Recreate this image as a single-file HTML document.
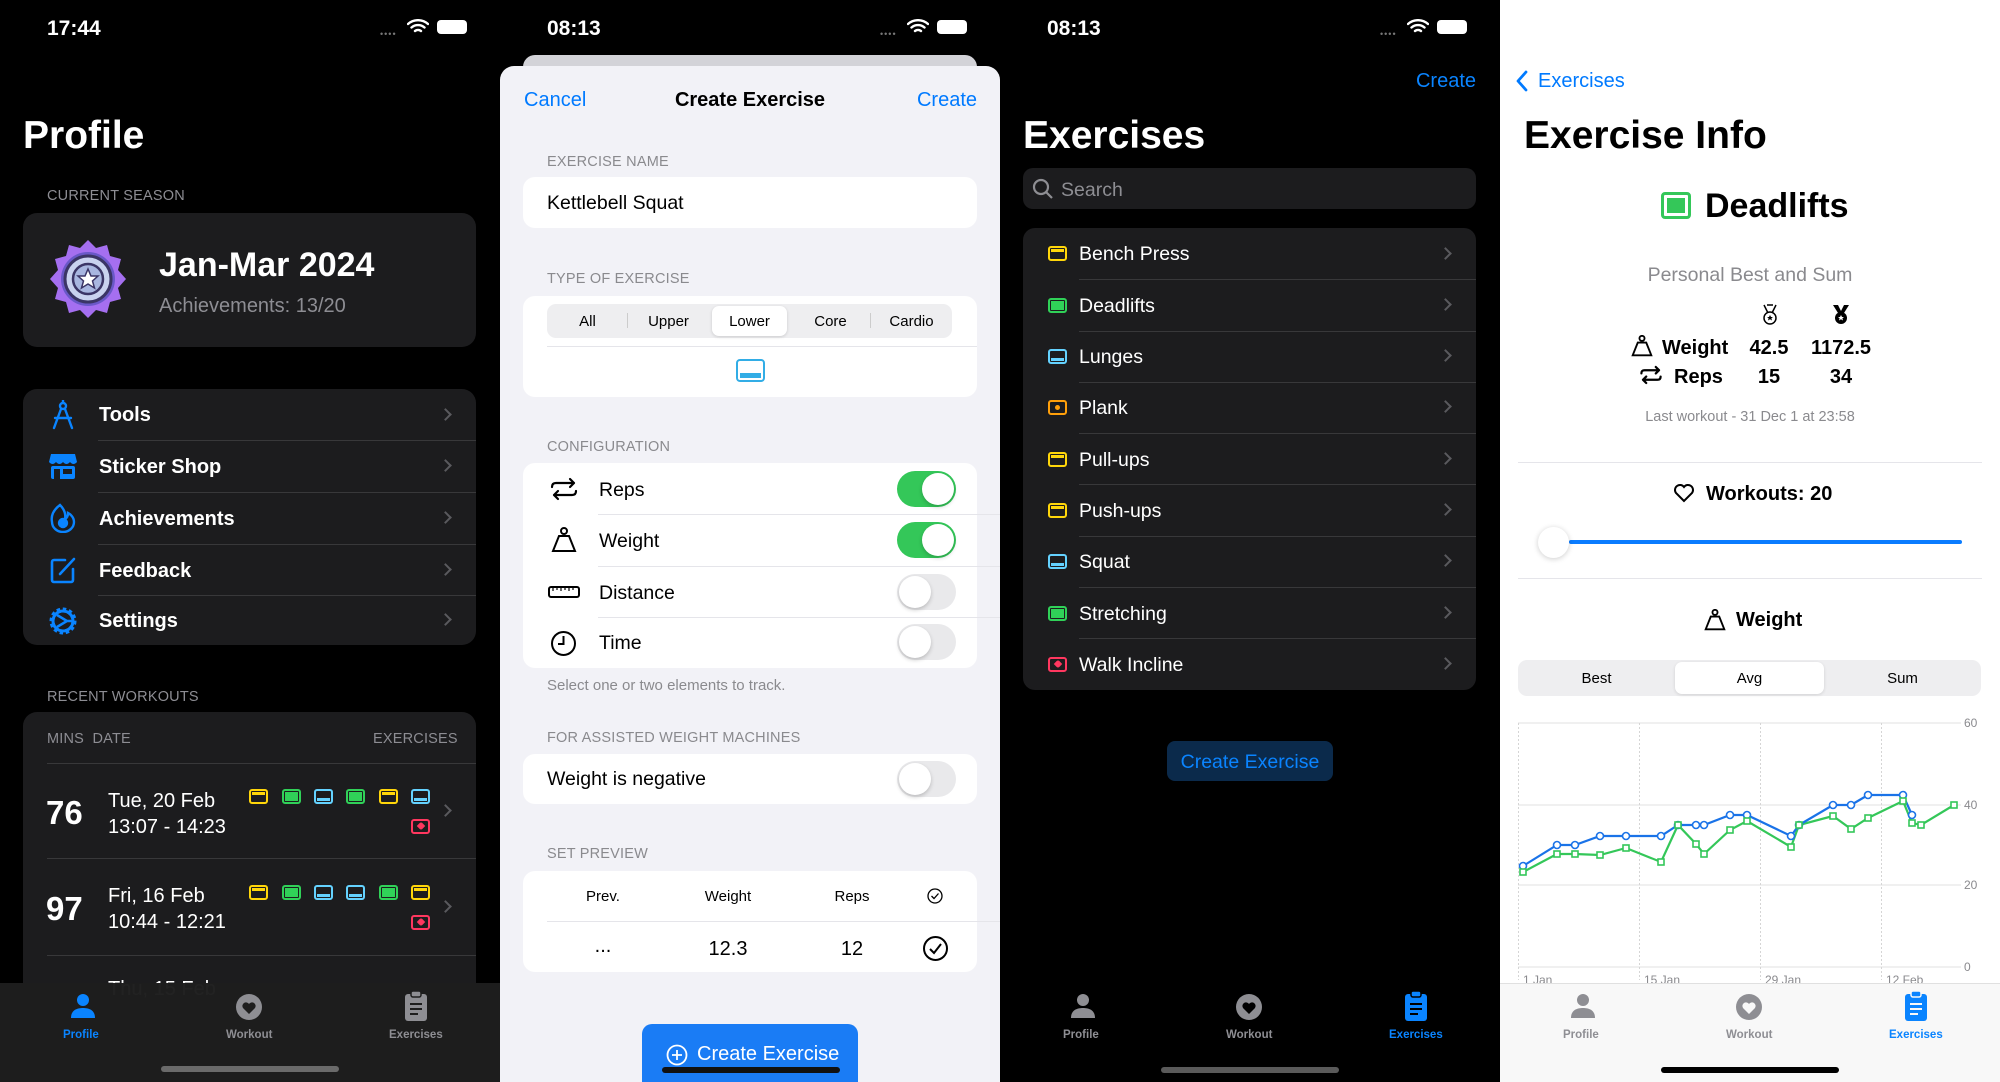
<!DOCTYPE html>
<html><head><meta charset="utf-8">
<style>
*{margin:0;padding:0;box-sizing:border-box}
body{width:2000px;height:1082px;overflow:hidden;background:#000;font-family:"Liberation Sans",sans-serif;position:relative}
.p{position:absolute;top:0;height:1082px;width:500px;overflow:hidden}
.a{position:absolute;white-space:nowrap}
.st{font-weight:bold;font-size:21px;top:17px;left:47px}
.cap{font-size:14.5px;letter-spacing:.2px}
.ex{position:absolute;width:19px;height:15px;border:2px solid;border-radius:3px}
.ex i{position:absolute;display:block}
.y{border-color:#ffd60a}.y i{left:1px;right:1px;top:1px;height:3px;background:#ffd60a}
.g{border-color:#30d158}.g i{left:1px;right:1px;top:1px;bottom:1px;background:#30d158}
.b{border-color:#64d2ff}.b i{left:1px;right:1px;bottom:1px;height:3px;background:#64d2ff}
.o{border-color:#ff9f0a}.o i{left:5px;top:3px;width:5px;height:5px;border-radius:3px;background:#ff9f0a}
.r{border-color:#ff375f}.r i{left:5px;top:2px;width:6px;height:6px;background:#ff375f;transform:rotate(45deg);border-radius:2px 0 2px 0}
.chev{position:absolute;width:9px;height:9px;border-right:2px solid #5a5a5e;border-top:2px solid #5a5a5e;transform:rotate(45deg)}
.sep{position:absolute;height:1px}
.tog{position:absolute;width:59px;height:36px;border-radius:18px}
.tog::after{content:"";position:absolute;top:2px;width:32px;height:32px;border-radius:16px;background:#fff;box-shadow:0 2px 4px rgba(0,0,0,.2)}
.on{background:#34c759}.on::after{right:2px}
.off{background:#e9e9eb}.off::after{left:2px}
.tl{top:1029px !important}
</style></head><body>

<!-- PANEL 1 -->
<div class="p" style="left:0;background:#000">
 <div class="a st" style="color:#fff">17:44</div>
 <div class="a" style="left:380px;top:29px;color:#777;font-size:9px;letter-spacing:1px">••••</div>
 <svg class="a" style="left:407px;top:19px" width="22" height="16" viewBox="0 0 22 16"><path d="M1 5a15 15 0 0 1 20 0M4.5 8.5a10 10 0 0 1 13 0M8 12a5 5 0 0 1 6 0" stroke="#fff" stroke-width="2.4" fill="none" stroke-linecap="round"/></svg>
 <div class="a" style="left:437px;top:20px;width:30px;height:14px;border-radius:4px;background:#fff"></div>
 <div class="a" style="left:23px;top:114px;font-size:39px;font-weight:bold;color:#fff">Profile</div>
 <div class="a cap" style="left:47px;top:188px;color:#8d8d93">CURRENT SEASON</div>
 <div class="a" style="left:23px;top:213px;width:453px;height:134px;border-radius:14px;background:#1c1c1e"></div>
 <svg class="a" style="left:47px;top:238px" width="82" height="82" viewBox="0 0 82 82">
  <polygon points="41,2 49,10 60,7 63,18 74,21 71,32 79,41 71,50 74,61 63,64 60,75 49,72 41,80 33,72 22,75 19,64 8,61 11,50 3,41 11,32 8,21 19,18 22,7 33,10" fill="#a56ff0"/>
  <circle cx="41" cy="41" r="27" fill="#6a58c8"/><circle cx="41" cy="41" r="23" fill="#c9d2ef" stroke="#3b3566" stroke-width="3"/>
  <circle cx="41" cy="41" r="15" fill="#a8b6e0" stroke="#3b3566" stroke-width="2.5"/>
  <polygon points="41,31 44,38 51,38 45.5,43 47.5,50 41,46 34.5,50 36.5,43 31,38 38,38" fill="#fff" stroke="#3b3566" stroke-width="1.5"/></svg>
 <div class="a" style="left:159px;top:246px;font-size:34px;font-weight:bold;color:#fff">Jan-Mar 2024</div>
 <div class="a" style="left:159px;top:295px;font-size:20px;color:#8d8d93">Achievements: 13/20</div>

 <div class="a" style="left:23px;top:389px;width:453px;height:256px;border-radius:14px;background:#1c1c1e"></div>
 <div class="sep" style="left:98px;right:24px;top:440px;background:#38383a"></div>
 <div class="sep" style="left:98px;right:24px;top:492px;background:#38383a"></div>
 <div class="sep" style="left:98px;right:24px;top:544px;background:#38383a"></div>
 <div class="sep" style="left:98px;right:24px;top:595px;background:#38383a"></div>
 <svg class="a" style="left:50px;top:400px" width="26" height="30" viewBox="0 0 26 30" fill="none" stroke="#0a84ff" stroke-width="2.4" stroke-linecap="round"><circle cx="13" cy="6" r="3"/><path d="M13 2V0M11 9L4 28M15 9L22 28M5 18h16"/></svg>
 <svg class="a" style="left:48px;top:452px" width="30" height="28" viewBox="0 0 30 28"><path d="M3 2h24l2 8H1z" fill="#0a84ff"/><path d="M1 10q3.5 4 7 0 3.5 4 7 0 3.5 4 7 0 3.5 4 7 0" fill="#0a84ff"/><rect x="3" y="14" width="24" height="13" rx="2" fill="#0a84ff"/><rect x="6" y="17" width="6" height="10" fill="#1c1c1e"/><rect x="15" y="17" width="9" height="5" fill="#1c1c1e"/></svg>
 <svg class="a" style="left:50px;top:503px" width="26" height="30" viewBox="0 0 26 30" fill="none" stroke="#0a84ff" stroke-width="2.4"><path d="M10 2c-8 6-9 12-8 17a11 10 0 0 0 22 0c0-5-4-8-6-9 0 3-1 5-3 6 1-5-1-10-5-14z"/><circle cx="13" cy="20" r="4" fill="#0a84ff"/></svg>
 <svg class="a" style="left:50px;top:556px" width="26" height="28" viewBox="0 0 26 28" fill="none" stroke="#0a84ff" stroke-width="2.6" stroke-linecap="round"><path d="M15 4H4a2 2 0 0 0-2 2v18a2 2 0 0 0 2 2h17a2 2 0 0 0 2-2V13"/><path d="M10 18L24 3"/></svg>
 <svg class="a" style="left:48px;top:606px" width="30" height="30" viewBox="0 0 30 30"><circle cx="15" cy="15" r="11" fill="none" stroke="#0a84ff" stroke-width="5" stroke-dasharray="3.2 2.5"/><circle cx="15" cy="15" r="10" fill="none" stroke="#0a84ff" stroke-width="3"/><path d="M9 9l10 6-10 6M19 15h5" stroke="#0a84ff" stroke-width="2.5" fill="none"/></svg>
 <div class="a" style="left:99px;top:404px;font-size:20px;font-weight:bold;color:#fff">Tools</div>
 <div class="a" style="left:99px;top:456px;font-size:20px;font-weight:bold;color:#fff">Sticker Shop</div>
 <div class="a" style="left:99px;top:508px;font-size:20px;font-weight:bold;color:#fff">Achievements</div>
 <div class="a" style="left:99px;top:560px;font-size:20px;font-weight:bold;color:#fff">Feedback</div>
 <div class="a" style="left:99px;top:610px;font-size:20px;font-weight:bold;color:#fff">Settings</div>
 <div class="chev" style="left:441px;top:410px"></div>
 <div class="chev" style="left:441px;top:461px"></div>
 <div class="chev" style="left:441px;top:513px"></div>
 <div class="chev" style="left:441px;top:565px"></div>
 <div class="chev" style="left:441px;top:615px"></div>

 <div class="a cap" style="left:47px;top:689px;color:#8d8d93">RECENT WORKOUTS</div>
 <div class="a" style="left:23px;top:712px;width:453px;height:400px;border-radius:14px;background:#1c1c1e"></div>
 <div class="a cap" style="left:47px;top:731px;color:#8d8d93">MINS&nbsp;&nbsp;DATE</div>
 <div class="a cap" style="left:373px;top:731px;color:#8d8d93">EXERCISES</div>
 <div class="sep" style="left:47px;right:24px;top:763px;background:#38383a"></div>
 <div class="a" style="left:46px;top:794px;font-size:33px;font-weight:bold;color:#fff">76</div>
 <div class="a" style="left:108px;top:788px;font-size:20px;color:#fff;line-height:26px">Tue, 20 Feb<br>13:07 - 14:23</div>
 <div class="ex y" style="left:249px;top:789px"><i></i></div><div class="ex g" style="left:282px;top:789px"><i></i></div><div class="ex b" style="left:314px;top:789px"><i></i></div><div class="ex g" style="left:346px;top:789px"><i></i></div><div class="ex y" style="left:379px;top:789px"><i></i></div><div class="ex b" style="left:411px;top:789px"><i></i></div><div class="ex r" style="left:411px;top:819px"><i></i></div>
 <div class="chev" style="left:441px;top:806px"></div>
 <div class="sep" style="left:47px;right:24px;top:858px;background:#38383a"></div>
 <div class="a" style="left:46px;top:890px;font-size:33px;font-weight:bold;color:#fff">97</div>
 <div class="a" style="left:108px;top:883px;font-size:20px;color:#fff;line-height:26px">Fri, 16 Feb<br>10:44 - 12:21</div>
 <div class="ex y" style="left:249px;top:885px"><i></i></div><div class="ex g" style="left:282px;top:885px"><i></i></div><div class="ex b" style="left:314px;top:885px"><i></i></div><div class="ex b" style="left:346px;top:885px"><i></i></div><div class="ex g" style="left:379px;top:885px"><i></i></div><div class="ex y" style="left:411px;top:885px"><i></i></div><div class="ex r" style="left:411px;top:915px"><i></i></div>
 <div class="chev" style="left:441px;top:902px"></div>
 <div class="sep" style="left:47px;right:24px;top:955px;background:#38383a"></div>
 <div class="a" style="left:108px;top:978px;font-size:20px;color:#fff">Thu, 15 Feb</div>
 <div class="a" style="left:0;top:983px;width:500px;height:99px;background:rgba(30,30,30,.98)"></div>
 <svg class="a" style="left:69px;top:993px" width="28" height="26" viewBox="0 0 28 26"><circle cx="14" cy="7" r="6" fill="#0a84ff"/><path d="M2 25c0-8 6-10 12-10s12 2 12 10z" fill="#0a84ff"/></svg>
 <div class="a tl" style="left:63px;font-size:11.5px;font-weight:bold;color:#0a84ff">Profile</div>
 <svg class="a" style="left:235px;top:993px" width="28" height="28" viewBox="0 0 28 28"><circle cx="14" cy="14" r="13" fill="#8e8e93"/><path d="M14 21l-6-6a3.5 3.5 0 0 1 6-4 3.5 3.5 0 0 1 6 4z" fill="#1e1e1e"/></svg>
 <div class="a tl" style="left:226px;font-size:11.5px;font-weight:bold;color:#8e8e93">Workout</div>
 <svg class="a" style="left:404px;top:990px" width="24" height="32" viewBox="0 0 24 32"><rect x="1" y="4" width="22" height="27" rx="3" fill="#8e8e93"/><rect x="7" y="1" width="10" height="6" rx="2" fill="#8e8e93" stroke="#1e1e1e" stroke-width="1.5"/><path d="M6 14h12M6 19h12M6 24h8" stroke="#1e1e1e" stroke-width="2"/></svg>
 <div class="a tl" style="left:389px;font-size:11.5px;font-weight:bold;color:#8e8e93">Exercises</div>
 <div class="a" style="left:161px;top:1066px;width:178px;height:6px;border-radius:3px;background:#6a6a6a"></div>
</div>

<!-- PANEL 2 -->
<div class="p" style="left:500px;background:#000">
 <div class="a st" style="color:#fff">08:13</div>
 <div class="a" style="left:380px;top:29px;color:#777;font-size:9px;letter-spacing:1px">••••</div>
 <svg class="a" style="left:407px;top:19px" width="22" height="16" viewBox="0 0 22 16"><path d="M1 5a15 15 0 0 1 20 0M4.5 8.5a10 10 0 0 1 13 0M8 12a5 5 0 0 1 6 0" stroke="#fff" stroke-width="2.4" fill="none" stroke-linecap="round"/></svg>
 <div class="a" style="left:437px;top:20px;width:30px;height:14px;border-radius:4px;background:#fff"></div>
 <div class="a" style="left:23px;top:55px;width:454px;height:30px;border-radius:12px;background:#d3d3d8"></div>
 <div class="a" style="left:0;top:66px;width:500px;height:1030px;border-radius:14px;background:#f2f2f7"></div>
 <div class="a" style="left:24px;top:89px;font-size:20px;color:#007aff">Cancel</div>
 <div class="a" style="left:0;width:500px;text-align:center;top:89px;font-size:20px;font-weight:bold;color:#000">Create Exercise</div>
 <div class="a" style="right:23px;top:89px;font-size:20px;color:#007aff">Create</div>
 <div class="a cap" style="left:47px;top:154px;color:#8a8a8e">EXERCISE NAME</div>
 <div class="a" style="left:23px;top:177px;width:454px;height:51px;border-radius:12px;background:#fff"></div>
 <div class="a" style="left:47px;top:192px;font-size:19.5px;color:#000">Kettlebell Squat</div>
 <div class="a cap" style="left:47px;top:271px;color:#8a8a8e">TYPE OF EXERCISE</div>
 <div class="a" style="left:23px;top:296px;width:454px;height:101px;border-radius:12px;background:#fff"></div>
 <div class="a" style="left:47px;top:304px;width:405px;height:34px;border-radius:9px;background:#eeeef0"></div>
 <div class="a" style="left:212px;top:306px;width:75px;height:30px;border-radius:7px;background:#fff;box-shadow:0 1px 3px rgba(0,0,0,.15)"></div>
 <div class="a" style="left:127px;top:313px;width:1px;height:15px;background:#ccc"></div>
 <div class="a" style="left:370px;top:313px;width:1px;height:15px;background:#ccc"></div>
 <div class="a" style="left:47px;top:313px;width:81px;text-align:center;font-size:15px;color:#000">All</div>
 <div class="a" style="left:128px;top:313px;width:81px;text-align:center;font-size:15px;color:#000">Upper</div>
 <div class="a" style="left:212px;top:313px;width:75px;text-align:center;font-size:15px;color:#000">Lower</div>
 <div class="a" style="left:290px;top:313px;width:81px;text-align:center;font-size:15px;color:#000">Core</div>
 <div class="a" style="left:371px;top:313px;width:81px;text-align:center;font-size:15px;color:#000">Cardio</div>
 <div class="sep" style="left:47px;right:23px;top:346px;background:#e5e5ea"></div>
 <div class="a" style="left:236px;top:359px;width:29px;height:23px;border:2.5px solid #32ade6;border-radius:4px"><div style="position:absolute;left:2px;right:2px;bottom:2px;height:5px;background:#32ade6"></div></div>
 <div class="a cap" style="left:47px;top:439px;color:#8a8a8e">CONFIGURATION</div>
 <div class="a" style="left:23px;top:463px;width:454px;height:205px;border-radius:12px;background:#fff"></div>
 <div class="sep" style="left:98px;right:0;top:514px;background:#e5e5ea"></div>
 <div class="sep" style="left:98px;right:0;top:566px;background:#e5e5ea"></div>
 <div class="sep" style="left:98px;right:0;top:617px;background:#e5e5ea"></div>
 <svg class="a" style="left:49px;top:477px" width="30" height="24" viewBox="0 0 30 24" fill="none" stroke="#000" stroke-width="2.2" stroke-linecap="round" stroke-linejoin="round"><path d="M3 10q0-4 4-4h18M21 2l4 4-4 4M27 14q0 4-4 4H5M9 22l-4-4 4-4"/></svg>
 <svg class="a" style="left:50px;top:527px" width="28" height="26" viewBox="0 0 28 26" fill="none" stroke="#000" stroke-width="2"><circle cx="14" cy="4" r="3"/><path d="M9 9h10l6 15H3z"/></svg>
 <svg class="a" style="left:48px;top:585px" width="32" height="14" viewBox="0 0 32 14" fill="none" stroke="#000" stroke-width="2"><rect x="1" y="2" width="30" height="10" rx="2"/><path d="M5 2v4M9 2v3M13 2v4M17 2v3M21 2v4M25 2v3" stroke-width="1.2"/></svg>
 <svg class="a" style="left:50px;top:630px" width="27" height="27" viewBox="0 0 27 27" fill="none" stroke="#000" stroke-width="2"><circle cx="13.5" cy="13.5" r="11.5"/><path d="M13.5 6v8H8"/></svg>
 <div class="a" style="left:99px;top:479px;font-size:19.5px;color:#000">Reps</div>
 <div class="a" style="left:99px;top:530px;font-size:19.5px;color:#000">Weight</div>
 <div class="a" style="left:99px;top:582px;font-size:19.5px;color:#000">Distance</div>
 <div class="a" style="left:99px;top:632px;font-size:19.5px;color:#000">Time</div>
 <div class="tog on" style="left:397px;top:471px"></div>
 <div class="tog on" style="left:397px;top:522px"></div>
 <div class="tog off" style="left:397px;top:574px"></div>
 <div class="tog off" style="left:397px;top:624px"></div>
 <div class="a" style="left:47px;top:677px;font-size:15px;color:#8a8a8e">Select one or two elements to track.</div>
 <div class="a cap" style="left:47px;top:730px;color:#8a8a8e">FOR ASSISTED WEIGHT MACHINES</div>
 <div class="a" style="left:23px;top:754px;width:454px;height:50px;border-radius:12px;background:#fff"></div>
 <div class="a" style="left:47px;top:768px;font-size:19.5px;color:#000">Weight is negative</div>
 <div class="tog off" style="left:397px;top:761px"></div>
 <div class="a cap" style="left:47px;top:846px;color:#8a8a8e">SET PREVIEW</div>
 <div class="a" style="left:23px;top:871px;width:454px;height:101px;border-radius:12px;background:#fff"></div>
 <div class="a" style="left:63px;top:888px;width:80px;text-align:center;font-size:15px;color:#000">Prev.</div>
 <div class="a" style="left:178px;top:888px;width:100px;text-align:center;font-size:15px;color:#000">Weight</div>
 <div class="a" style="left:302px;top:888px;width:100px;text-align:center;font-size:15px;color:#000">Reps</div>
 <svg class="a" style="left:427px;top:888px" width="16" height="16" viewBox="0 0 16 16" fill="none" stroke="#000" stroke-width="1.3"><circle cx="8" cy="8" r="7"/><path d="M4.5 8l2.5 2.5 4.5-5"/></svg>
 <div class="sep" style="left:47px;right:0;top:921px;background:#e5e5ea"></div>
 <div class="a" style="left:63px;top:935px;width:80px;text-align:center;font-size:20px;color:#000">...</div>
 <div class="a" style="left:178px;top:938px;width:100px;text-align:center;font-size:20px;color:#000">12.3</div>
 <div class="a" style="left:302px;top:938px;width:100px;text-align:center;font-size:20px;color:#000">12</div>
 <svg class="a" style="left:422px;top:935px" width="27" height="27" viewBox="0 0 27 27" fill="none" stroke="#000" stroke-width="2"><circle cx="13.5" cy="13.5" r="11.5"/><path d="M8 14l4 4 7-9"/></svg>
 <div class="a" style="left:142px;top:1024px;width:216px;height:70px;border-radius:10px;background:#1a7cf5"></div>
 <svg class="a" style="left:166px;top:1044px" width="22" height="22" viewBox="0 0 22 22" fill="none" stroke="#fff" stroke-width="1.8"><circle cx="11" cy="11" r="9.5"/><path d="M11 6v10M6 11h10"/></svg>
 <div class="a" style="left:197px;top:1043px;font-size:20px;color:#fff">Create Exercise</div>
 <div class="a" style="left:162px;top:1067px;width:178px;height:6px;border-radius:3px;background:#111"></div>
</div>

<!-- PANEL 3 -->
<div class="p" style="left:1000px;background:#000">
 <div class="a st" style="color:#fff">08:13</div>
 <div class="a" style="left:380px;top:29px;color:#777;font-size:9px;letter-spacing:1px">••••</div>
 <svg class="a" style="left:407px;top:19px" width="22" height="16" viewBox="0 0 22 16"><path d="M1 5a15 15 0 0 1 20 0M4.5 8.5a10 10 0 0 1 13 0M8 12a5 5 0 0 1 6 0" stroke="#fff" stroke-width="2.4" fill="none" stroke-linecap="round"/></svg>
 <div class="a" style="left:437px;top:20px;width:30px;height:14px;border-radius:4px;background:#fff"></div>
 <div class="a" style="right:24px;top:70px;font-size:20px;color:#0a84ff">Create</div>
 <div class="a" style="left:23px;top:114px;font-size:39px;font-weight:bold;color:#fff">Exercises</div>
 <div class="a" style="left:23px;top:168px;width:453px;height:41px;border-radius:10px;background:#1c1c1e"></div>
 <svg class="a" style="left:32px;top:178px" width="22" height="22" viewBox="0 0 22 22" fill="none" stroke="#8e8e93" stroke-width="2.2"><circle cx="9" cy="9" r="7"/><path d="M14 14l6 6"/></svg>
 <div class="a" style="left:61px;top:179px;font-size:19.5px;color:#8e8e93">Search</div>
 <div class="a" style="left:23px;top:228px;width:453px;height:462px;border-radius:12px;background:#1c1c1e"></div>
 <div class="sep" style="left:79px;right:24px;top:279px;background:#38383a"></div>
 <div class="sep" style="left:79px;right:24px;top:331px;background:#38383a"></div>
 <div class="sep" style="left:79px;right:24px;top:382px;background:#38383a"></div>
 <div class="sep" style="left:79px;right:24px;top:433px;background:#38383a"></div>
 <div class="sep" style="left:79px;right:24px;top:484px;background:#38383a"></div>
 <div class="sep" style="left:79px;right:24px;top:536px;background:#38383a"></div>
 <div class="sep" style="left:79px;right:24px;top:587px;background:#38383a"></div>
 <div class="sep" style="left:79px;right:24px;top:638px;background:#38383a"></div>
 <div class="ex y" style="left:48px;top:246px"><i></i></div><div class="a" style="left:79px;top:243px;font-size:19.5px;color:#fff">Bench Press</div><div class="chev" style="left:441px;top:249px"></div>
 <div class="ex g" style="left:48px;top:298px"><i></i></div><div class="a" style="left:79px;top:295px;font-size:19.5px;color:#fff">Deadlifts</div><div class="chev" style="left:441px;top:300px"></div>
 <div class="ex b" style="left:48px;top:349px"><i></i></div><div class="a" style="left:79px;top:346px;font-size:19.5px;color:#fff">Lunges</div><div class="chev" style="left:441px;top:351px"></div>
 <div class="ex o" style="left:48px;top:400px"><i></i></div><div class="a" style="left:79px;top:397px;font-size:19.5px;color:#fff">Plank</div><div class="chev" style="left:441px;top:402px"></div>
 <div class="ex y" style="left:48px;top:452px"><i></i></div><div class="a" style="left:79px;top:449px;font-size:19.5px;color:#fff">Pull-ups</div><div class="chev" style="left:441px;top:454px"></div>
 <div class="ex y" style="left:48px;top:503px"><i></i></div><div class="a" style="left:79px;top:500px;font-size:19.5px;color:#fff">Push-ups</div><div class="chev" style="left:441px;top:505px"></div>
 <div class="ex b" style="left:48px;top:554px"><i></i></div><div class="a" style="left:79px;top:551px;font-size:19.5px;color:#fff">Squat</div><div class="chev" style="left:441px;top:556px"></div>
 <div class="ex g" style="left:48px;top:606px"><i></i></div><div class="a" style="left:79px;top:603px;font-size:19.5px;color:#fff">Stretching</div><div class="chev" style="left:441px;top:608px"></div>
 <div class="ex r" style="left:48px;top:657px"><i></i></div><div class="a" style="left:79px;top:654px;font-size:19.5px;color:#fff">Walk Incline</div><div class="chev" style="left:441px;top:659px"></div>
 <div class="a" style="left:167px;top:741px;width:166px;height:40px;border-radius:8px;background:#0b2a4b"></div>
 <div class="a" style="left:167px;top:751px;width:166px;text-align:center;font-size:19.5px;color:#0a84ff">Create Exercise</div>
 <svg class="a" style="left:69px;top:993px" width="28" height="26" viewBox="0 0 28 26"><circle cx="14" cy="7" r="6" fill="#8e8e93"/><path d="M2 25c0-8 6-10 12-10s12 2 12 10z" fill="#8e8e93"/></svg>
 <div class="a tl" style="left:63px;font-size:11.5px;font-weight:bold;color:#8e8e93">Profile</div>
 <svg class="a" style="left:235px;top:993px" width="28" height="28" viewBox="0 0 28 28"><circle cx="14" cy="14" r="13" fill="#8e8e93"/><path d="M14 21l-6-6a3.5 3.5 0 0 1 6-4 3.5 3.5 0 0 1 6 4z" fill="#000"/></svg>
 <div class="a tl" style="left:226px;font-size:11.5px;font-weight:bold;color:#8e8e93">Workout</div>
 <svg class="a" style="left:404px;top:990px" width="24" height="32" viewBox="0 0 24 32"><rect x="1" y="4" width="22" height="27" rx="3" fill="#0a84ff"/><rect x="7" y="1" width="10" height="6" rx="2" fill="#0a84ff" stroke="#000" stroke-width="1.5"/><path d="M6 14h12M6 19h12M6 24h8" stroke="#000" stroke-width="2"/></svg>
 <div class="a tl" style="left:389px;font-size:11.5px;font-weight:bold;color:#0a84ff">Exercises</div>
 <div class="a" style="left:161px;top:1067px;width:178px;height:6px;border-radius:3px;background:#5a5a5a"></div>
</div>

<!-- PANEL 4 -->
<div class="p" style="left:1500px;background:#fff">
 <svg class="a" style="left:15px;top:70px" width="14" height="22" viewBox="0 0 14 22" fill="none" stroke="#007aff" stroke-width="2.8" stroke-linecap="round" stroke-linejoin="round"><path d="M11 2L3 11l8 9"/></svg>
 <div class="a" style="left:38px;top:70px;font-size:20px;color:#007aff">Exercises</div>
 <div class="a" style="left:24px;top:114px;font-size:39px;font-weight:bold;color:#000">Exercise Info</div>
 <div class="a" style="left:161px;top:192px;width:30px;height:27px;border:3px solid #34c759;border-radius:4px"><div style="position:absolute;left:3px;right:3px;top:3px;bottom:3px;background:#34c759"></div></div>
 <div class="a" style="left:205px;top:187px;font-size:34px;font-weight:bold;color:#000">Deadlifts</div>
 <div class="a" style="left:0;width:500px;text-align:center;top:264px;font-size:19.5px;color:#8a8a8e">Personal Best and Sum</div>
 <svg class="a" style="left:260px;top:304px" width="20" height="22" viewBox="0 0 20 22" fill="none" stroke="#000" stroke-width="1.5"><path d="M4 1l4 8M16 1l-4 8M7 1h6"/><circle cx="10" cy="14" r="6"/><path d="M10 11l1 2h2l-1.6 1.3.6 2.2-2-1.3-2 1.3.6-2.2L7 13h2z" fill="#000" stroke="none"/></svg>
 <svg class="a" style="left:331px;top:304px" width="20" height="22" viewBox="0 0 20 22"><path d="M2 1h5l3 6 3-6h5l-5 8H7z" fill="#000"/><circle cx="10" cy="14" r="6" fill="#000"/><path d="M10 11l1 2h2l-1.6 1.3.6 2.2-2-1.3-2 1.3.6-2.2L7 13h2z" fill="#fff"/></svg>
 <svg class="a" style="left:130px;top:335px" width="24" height="22" viewBox="0 0 28 26" fill="none" stroke="#000" stroke-width="2.2"><circle cx="14" cy="4" r="3"/><path d="M9 9h10l6 15H3z"/></svg>
 <div class="a" style="left:162px;top:337px;font-size:20px;font-weight:bold;color:#000">Weight</div>
 <div class="a" style="left:229px;top:337px;width:80px;text-align:center;font-size:20px;font-weight:bold;color:#000">42.5</div>
 <div class="a" style="left:291px;top:337px;width:100px;text-align:center;font-size:20px;font-weight:bold;color:#000">1172.5</div>
 <svg class="a" style="left:139px;top:365px" width="24" height="20" viewBox="0 0 30 24" fill="none" stroke="#000" stroke-width="2.8" stroke-linecap="round" stroke-linejoin="round"><path d="M3 10q0-4 4-4h18M21 2l4 4-4 4M27 14q0 4-4 4H5M9 22l-4-4 4-4"/></svg>
 <div class="a" style="left:174px;top:366px;font-size:20px;font-weight:bold;color:#000">Reps</div>
 <div class="a" style="left:229px;top:366px;width:80px;text-align:center;font-size:20px;font-weight:bold;color:#000">15</div>
 <div class="a" style="left:291px;top:366px;width:100px;text-align:center;font-size:20px;font-weight:bold;color:#000">34</div>
 <div class="a" style="left:0;width:500px;text-align:center;top:409px;font-size:14.5px;color:#8a8a8e">Last workout - 31 Dec 1 at 23:58</div>
 <div class="sep" style="left:18px;right:18px;top:462px;background:#e5e5ea"></div>
 <svg class="a" style="left:173px;top:483px" width="22" height="20" viewBox="0 0 22 20" fill="none" stroke="#000" stroke-width="2"><path d="M11 18L3 10a4.5 4.5 0 0 1 8-6 4.5 4.5 0 0 1 8 6z"/></svg>
 <div class="a" style="left:206px;top:483px;font-size:20px;font-weight:bold;color:#000">Workouts: 20</div>
 <div class="a" style="left:69px;top:540px;width:393px;height:4px;border-radius:2px;background:#0a7cff"></div>
 <div class="a" style="left:38px;top:527px;width:31px;height:31px;border-radius:16px;background:#fff;box-shadow:0 1px 6px rgba(0,0,0,.2)"></div>
 <div class="sep" style="left:18px;right:18px;top:578px;background:#e5e5ea"></div>
 <svg class="a" style="left:203px;top:609px" width="24" height="22" viewBox="0 0 28 26" fill="none" stroke="#000" stroke-width="2.2"><circle cx="14" cy="4" r="3"/><path d="M9 9h10l6 15H3z"/></svg>
 <div class="a" style="left:236px;top:609px;font-size:20px;font-weight:bold;color:#000">Weight</div>
 <div class="a" style="left:18px;top:660px;width:463px;height:36px;border-radius:9px;background:#eeeef0"></div>
 <div class="a" style="left:175px;top:662px;width:149px;height:32px;border-radius:7px;background:#fff;box-shadow:0 1px 3px rgba(0,0,0,.12)"></div>
 <div class="a" style="left:18px;top:670px;width:157px;text-align:center;font-size:15px;color:#000">Best</div>
 <div class="a" style="left:175px;top:670px;width:149px;text-align:center;font-size:15px;color:#000">Avg</div>
 <div class="a" style="left:324px;top:670px;width:157px;text-align:center;font-size:15px;color:#000">Sum</div>
 <svg class="a" style="left:0;top:700px" width="500" height="300" viewBox="1500 700 500 300">
  <g stroke="#e2e2e2" stroke-width="1"><path d="M1518 723H1961M1518 805H1961M1518 885H1961M1518 967H1961"/></g>
  <g stroke="#d5d5d5" stroke-width="1" stroke-dasharray="2 2"><path d="M1518.5 723V980M1639.5 723V980M1760.5 723V980M1881.5 723V980"/></g>
  <g font-family="Liberation Sans" font-size="12" fill="#8a8a8e"><text x="1964" y="727">60</text><text x="1964" y="809">40</text><text x="1964" y="889">20</text><text x="1964" y="971">0</text>
  <text x="1523" y="984">1 Jan</text><text x="1644" y="984">15 Jan</text><text x="1765" y="984">29 Jan</text><text x="1886" y="984">12 Feb</text></g>
  <polyline fill="none" stroke="#34c759" stroke-width="2.2" points="1523,872 1557,854 1575,854 1600,855 1626,848 1661,862 1678,825 1696,844 1704,854 1730,830 1747,821 1791,847 1799,825 1833,816 1851,829 1868,818 1903,801 1912,823 1921,825 1954,805"/>
  <polyline fill="none" stroke="#1a73e8" stroke-width="2.2" points="1523,866 1557,845 1575,845 1600,836 1626,836 1661,836 1678,825 1696,825 1704,825 1730,815 1747,815 1791,836 1799,825 1833,805 1851,805 1868,795 1903,795 1912,815"/>
  <g fill="#fff" stroke="#1a73e8" stroke-width="1.6"><circle cx="1523" cy="866" r="3.5"/><circle cx="1557" cy="845" r="3.5"/><circle cx="1575" cy="845" r="3.5"/><circle cx="1600" cy="836" r="3.5"/><circle cx="1626" cy="836" r="3.5"/><circle cx="1661" cy="836" r="3.5"/><circle cx="1678" cy="825" r="3.5"/><circle cx="1696" cy="825" r="3.5"/><circle cx="1704" cy="825" r="3.5"/><circle cx="1730" cy="815" r="3.5"/><circle cx="1747" cy="815" r="3.5"/><circle cx="1791" cy="836" r="3.5"/><circle cx="1799" cy="825" r="3.5"/><circle cx="1833" cy="805" r="3.5"/><circle cx="1851" cy="805" r="3.5"/><circle cx="1868" cy="795" r="3.5"/><circle cx="1903" cy="795" r="3.5"/><circle cx="1912" cy="815" r="3.5"/></g>
  <g fill="#fff" stroke="#34c759" stroke-width="1.6"><rect x="1520" y="869" width="6" height="6"/><rect x="1554" y="851" width="6" height="6"/><rect x="1572" y="851" width="6" height="6"/><rect x="1597" y="852" width="6" height="6"/><rect x="1623" y="845" width="6" height="6"/><rect x="1658" y="859" width="6" height="6"/><rect x="1675" y="822" width="6" height="6"/><rect x="1693" y="841" width="6" height="6"/><rect x="1701" y="851" width="6" height="6"/><rect x="1727" y="827" width="6" height="6"/><rect x="1744" y="818" width="6" height="6"/><rect x="1788" y="844" width="6" height="6"/><rect x="1796" y="822" width="6" height="6"/><rect x="1830" y="813" width="6" height="6"/><rect x="1848" y="826" width="6" height="6"/><rect x="1865" y="815" width="6" height="6"/><rect x="1900" y="798" width="6" height="6"/><rect x="1909" y="820" width="6" height="6"/><rect x="1918" y="822" width="6" height="6"/><rect x="1951" y="802" width="6" height="6"/></g>
 </svg>
 <div class="a" style="left:0;top:983px;width:500px;height:99px;background:rgba(248,248,248,.97);border-top:1px solid #e0e0e0"></div>
 <svg class="a" style="left:69px;top:993px" width="28" height="26" viewBox="0 0 28 26"><circle cx="14" cy="7" r="6" fill="#8e8e93"/><path d="M2 25c0-8 6-10 12-10s12 2 12 10z" fill="#8e8e93"/></svg>
 <div class="a tl" style="left:63px;font-size:11.5px;font-weight:bold;color:#8e8e93">Profile</div>
 <svg class="a" style="left:235px;top:993px" width="28" height="28" viewBox="0 0 28 28"><circle cx="14" cy="14" r="13" fill="#8e8e93"/><path d="M14 21l-6-6a3.5 3.5 0 0 1 6-4 3.5 3.5 0 0 1 6 4z" fill="#f8f8f8"/></svg>
 <div class="a tl" style="left:226px;font-size:11.5px;font-weight:bold;color:#8e8e93">Workout</div>
 <svg class="a" style="left:404px;top:990px" width="24" height="32" viewBox="0 0 24 32"><rect x="1" y="4" width="22" height="27" rx="3" fill="#0a84ff"/><rect x="7" y="1" width="10" height="6" rx="2" fill="#0a84ff" stroke="#f8f8f8" stroke-width="1.5"/><path d="M6 14h12M6 19h12M6 24h8" stroke="#f8f8f8" stroke-width="2"/></svg>
 <div class="a tl" style="left:389px;font-size:11.5px;font-weight:bold;color:#0a84ff">Exercises</div>
 <div class="a" style="left:161px;top:1067px;width:178px;height:6px;border-radius:3px;background:#000"></div>
</div>
</body></html>
